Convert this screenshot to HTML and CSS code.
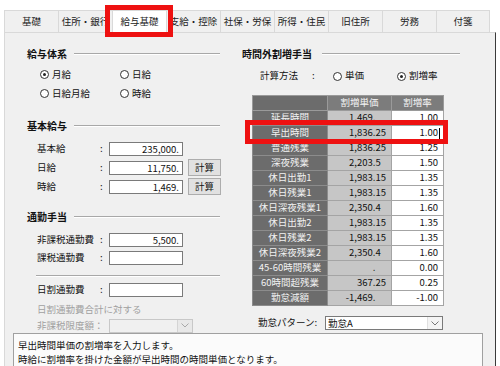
FILE: index.html
```html
<!DOCTYPE html>
<html lang="ja">
<head>
<meta charset="utf-8">
<link rel="stylesheet" href="styles.css">
</head>
<body>
<div class="tabs">
  <div class="tab">基礎</div>
  <div class="tab">住所・銀行</div>
  <div class="tab active">給与基礎</div>
  <div class="tab">支給・控除</div>
  <div class="tab">社保・労保</div>
  <div class="tab">所得・住民</div>
  <div class="tab">旧住所</div>
  <div class="tab">労務</div>
  <div class="tab">付箋</div>
</div>
<div class="panel">
  <div class="cols">
    <div class="col-left">
      <div class="sec-head"><span>給与体系</span><span class="rule"></span></div>
      <div class="radios">
        <label class="ropt"><span class="radio on"></span>月給</label>
        <label class="ropt"><span class="radio"></span>日給</label>
        <label class="ropt"><span class="radio"></span>日給月給</label>
        <label class="ropt"><span class="radio"></span>時給</label>
      </div>
      <div class="sec-head gap16"><span>基本給与</span><span class="rule"></span></div>
      <div class="fields f1">
        <div class="frow"><span class="flabel">基本給</span><span class="colon">:</span><span class="input">235,000.</span></div>
        <div class="frow"><span class="flabel">日給</span><span class="colon">:</span><span class="input">11,750.</span><span class="btn">計算</span></div>
        <div class="frow"><span class="flabel">時給</span><span class="colon">:</span><span class="input">1,469.</span><span class="btn">計算</span></div>
      </div>
      <div class="sec-head gap14"><span>通勤手当</span><span class="rule"></span></div>
      <div class="fields f2">
        <div class="frow r18"><span class="flabel">非課税通勤費</span><span class="colon">:</span><span class="input">5,500.</span></div>
        <div class="frow r18"><span class="flabel">課税通勤費</span><span class="colon">:</span><span class="input"></span></div>
      </div>
      <div class="sep"></div>
      <div class="frow r18 daily"><span class="flabel">日割通勤費</span><span class="colon">:</span><span class="input"></span></div>
      <div class="dis-text">日割通勤費合計に対する</div>
      <div class="frow r15 disabled"><span class="flabel wide">非課税限度額：</span><span class="select sel-dis"><span class="arrow"><svg width="8" height="5" viewBox="0 0 8 5"><polyline points="0.5,0.5 4,4 7.5,0.5" fill="none" stroke="#a8a8a8" stroke-width="1"/></svg></span></span></div>
    </div>
    <div class="col-right">
      <div class="sec-head rh"><span>時間外割増手当</span><span class="rule"></span></div>
      <div class="calc">
        <span class="clabel">計算方法</span><span class="ccolon">:</span>
        <label class="ropt c1"><span class="radio"></span>単価</label>
        <label class="ropt"><span class="radio on"></span>割増率</label>
      </div>
      <table class="grid">
        <colgroup><col class="c-a"><col class="c-b"><col class="c-c"></colgroup>
        <thead>
          <tr><th class="corner"></th><th>割増単価</th><th>割増率</th></tr>
        </thead>
        <tbody>
          <tr><th>延長時間</th><td class="v">1,469.<i>00</i></td><td class="r">1.00</td></tr>
          <tr><th>早出時間</th><td class="v">1,836.25</td><td class="r cur">1.00<span class="caret"></span></td></tr>
          <tr><th>普通残業</th><td class="v">1,836.25</td><td class="r">1.25</td></tr>
          <tr><th>深夜残業</th><td class="v">2,203.5<i>0</i></td><td class="r">1.50</td></tr>
          <tr><th>休日出勤1</th><td class="v">1,983.15</td><td class="r">1.35</td></tr>
          <tr><th>休日残業1</th><td class="v">1,983.15</td><td class="r">1.35</td></tr>
          <tr><th>休日深夜残業1</th><td class="v">2,350.4<i>0</i></td><td class="r">1.60</td></tr>
          <tr><th>休日出勤2</th><td class="v">1,983.15</td><td class="r">1.35</td></tr>
          <tr><th>休日残業2</th><td class="v">1,983.15</td><td class="r">1.35</td></tr>
          <tr><th>休日深夜残業2</th><td class="v">2,350.4<i>0</i></td><td class="r">1.60</td></tr>
          <tr><th>45-60時間残業</th><td class="v">.<i>00</i></td><td class="r">0.00</td></tr>
          <tr><th>60時間超残業</th><td class="v">367.25</td><td class="r">0.25</td></tr>
          <tr><th>勤怠減額</th><td class="v">-1,469.<i>00</i></td><td class="r">-1.00</td></tr>
        </tbody>
      </table>
      <div class="kintai">
        <span class="klabel">勤怠パターン:</span>
        <span class="select sel-k">勤怠A<span class="arrow"><svg width="8" height="5" viewBox="0 0 8 5"><polyline points="0.5,0.5 4,4 7.5,0.5" fill="none" stroke="#777" stroke-width="1"/></svg></span></span>
      </div>
    </div>
  </div>
  <div class="msg">早出時間単価の割増率を入力します。<br>時給に割増率を掛けた金額が早出時間の時間単価となります。</div>
</div>
<div class="hl hl-tab"></div>
<div class="hl hl-row"></div>
</body>
</html>
```

FILE: styles.css
```css
* { box-sizing: border-box; }
html, body { margin: 0; padding: 0; }
body {
  width: 500px;
  height: 366px;
  overflow: hidden;
  position: relative;
  background: #fff;
  font-family: "Noto Sans CJK JP", "Noto Sans", sans-serif;
  font-size: 9.5px;
  color: #111;
}

/* tabs */
.tabs {
  display: flex;
  height: 32px;
  padding: 10px 0 0 4px;
}
.tab {
  width: 54px;
  height: 22px;
  border: 1px solid #d9d9d9;
  border-right: none;
  border-bottom: none;
  background: #f0f0f0;
  display: flex;
  align-items: center;
  justify-content: center;
  color: #222;
  line-height: 1;
}
.tab:last-child { border-right: 1px solid #d9d9d9; }
.tab.active { background: #fff; }

/* panel */
.panel {
  margin-left: 4px;
  width: 492px;
  height: 334px;
  background: #f0f0f0;
  border-top: 1px solid #d9d9d9;
  border-left: 1px solid #d9d9d9;
  border-right: 1px solid #3a3a3a;
  display: flex;
  flex-direction: column;
}
.cols { display: flex; height: 300px; }
.col-left { width: 226px; display: flex; flex-direction: column; }
.col-right { flex: 1; display: flex; flex-direction: column; }

/* section heading */
.sec-head {
  display: flex;
  align-items: center;
  height: 14px;
  line-height: 14px;
  margin-top: 14px;
  padding-left: 22px;
  padding-right: 11px;
  font-weight: bold;
  font-size: 10px;
  color: #111;
}
.sec-head .rule {
  flex: 1;
  height: 2px;
  margin-left: 7px;
  border-top: 1px solid #a8a8a8;
  border-bottom: 1px solid #fff;
}
.sec-head.gap16 { margin-top: 16px; }
.sec-head.gap14 { margin-top: 14px; }
.sec-head.rh { padding-left: 11px; padding-right: 35px; }
.sec-head.rh .rule { margin-left: 10px; }

/* radios */
.radios {
  display: grid;
  grid-template-columns: 80px 80px;
  grid-auto-rows: 19px;
  margin-top: 4px;
  padding-left: 35px;
}
.ropt { display: flex; align-items: center; gap: 3px; line-height: 1; }
.radio {
  width: 9px;
  height: 9px;
  border: 1px solid #333;
  border-radius: 50%;
  background: #fff;
  position: relative;
  flex: none;
}
.radio.on::after {
  content: "";
  position: absolute;
  left: 2px;
  top: 2px;
  width: 3px;
  height: 3px;
  border-radius: 50%;
  background: #222;
}

/* fields */
.fields.f1 { margin-top: 6px; }
.fields.f2 { margin-top: 7px; }
.frow {
  display: flex;
  align-items: center;
  height: 19px;
  padding-left: 32px;
  line-height: 1;
}
.frow.r18 { height: 18px; }
.frow.r15 { height: 15px; }
.flabel { width: 63px; }
.flabel.wide { width: 72px; }
.colon { width: 9px; }
.input {
  width: 74px;
  height: 14px;
  background: #fff;
  border: 1px solid #7a7a7a;
  text-align: right;
  padding-right: 3px;
  line-height: 12px;
}
.btn {
  margin-left: 5px;
  width: 33px;
  height: 17px;
  background: #e1e1e1;
  border: 1px solid #adadad;
  display: flex;
  align-items: center;
  justify-content: center;
}
.sep {
  margin: 8px 11px 0 31px;
  height: 2px;
  border-top: 1px solid #a8a8a8;
  border-bottom: 1px solid #fff;
}
.frow.daily { margin-top: 4px; }
.dis-text {
  margin-top: 3px;
  height: 14px;
  line-height: 14px;
  padding-left: 32px;
  color: #a0a0a0;
}
.frow.disabled { margin-top: 2px; color: #a0a0a0; }

.select {
  position: relative;
  height: 14px;
  border: 1px solid #7a7a7a;
  background: #fff;
  line-height: 12px;
  padding-left: 2px;
  color: #111;
}
.sel-dis { width: 84px; border-color: #c8c8c8; background: #f0f0f0; }
.sel-k { width: 118px; }
.select .arrow {
  position: absolute;
  right: 0;
  top: 0;
  width: 15px;
  height: 12px;
  display: flex;
  align-items: center;
  justify-content: center;
  border-left: 1px solid #e0e0e0;
  background: #f4f4f4;
}
.sel-dis .arrow { background: #e8e8e8; border-left-color: #d4d4d4; }

/* right column */
.calc {
  display: flex;
  align-items: center;
  height: 18px;
  margin-top: 6px;
  padding-left: 29px;
  line-height: 1;
}
.clabel { width: 52px; }
.ccolon { width: 21px; }
.ropt.c1 { width: 64px; }

.grid {
  margin-top: 10px;
  margin-left: 21px;
  width: 191px;
  border-collapse: collapse;
  table-layout: fixed;
  border: 1px solid #555;
  line-height: 1;
}
.c-a { width: 75px; }
.c-b { width: 64px; }
.c-c { width: 52px; }
.grid th, .grid td {
  height: 15px;
  padding: 0;
  font-weight: normal;
  white-space: nowrap;
}
.grid thead th {
  background: #7c7c7c;
  color: #f4f4f4;
  text-align: center;
  border: 1px solid #9a9a9a;
}
.grid thead th.corner { background: #6c6c6c; }
.grid tbody th {
  background: #6c6c6c;
  color: #f2f2f2;
  text-align: center;
  border: 1px solid #8c8c8c;
}
.grid td.v {
  background: #c6c6c6;
  text-align: right;
  padding-right: 5px;
  border: 1px solid #a4a4a4;
}
.grid td.v i { font-style: normal; visibility: hidden; }
.grid td.r {
  background: #fff;
  text-align: right;
  padding-right: 5px;
  border: 1px solid #a4a4a4;
}
.grid td.r.cur { padding-right: 3px; }
.caret {
  display: inline-block;
  width: 1px;
  height: 11px;
  margin-left: 1px;
  background: #000;
  vertical-align: middle;
}

.kintai {
  display: flex;
  align-items: center;
  height: 16px;
  margin-top: 9px;
  padding-left: 27px;
  line-height: 1;
}
.klabel { width: 67px; }

/* message */
.msg {
  flex: 1;
  margin-left: 8px;
  width: 470px;
  border: 1px solid #a0a0a0;
  border-bottom: none;
  background: #fbfbfb;
  padding: 4px 0 0 4px;
  line-height: 14px;
  color: #111;
}

/* highlight boxes */
.hl {
  position: absolute;
  border: 5px solid #ee1111;
}
.hl-tab { left: 105px; top: 5px; width: 68px; height: 32px; }
.hl-row { left: 245px; top: 120px; width: 203px; height: 24px; }
```
